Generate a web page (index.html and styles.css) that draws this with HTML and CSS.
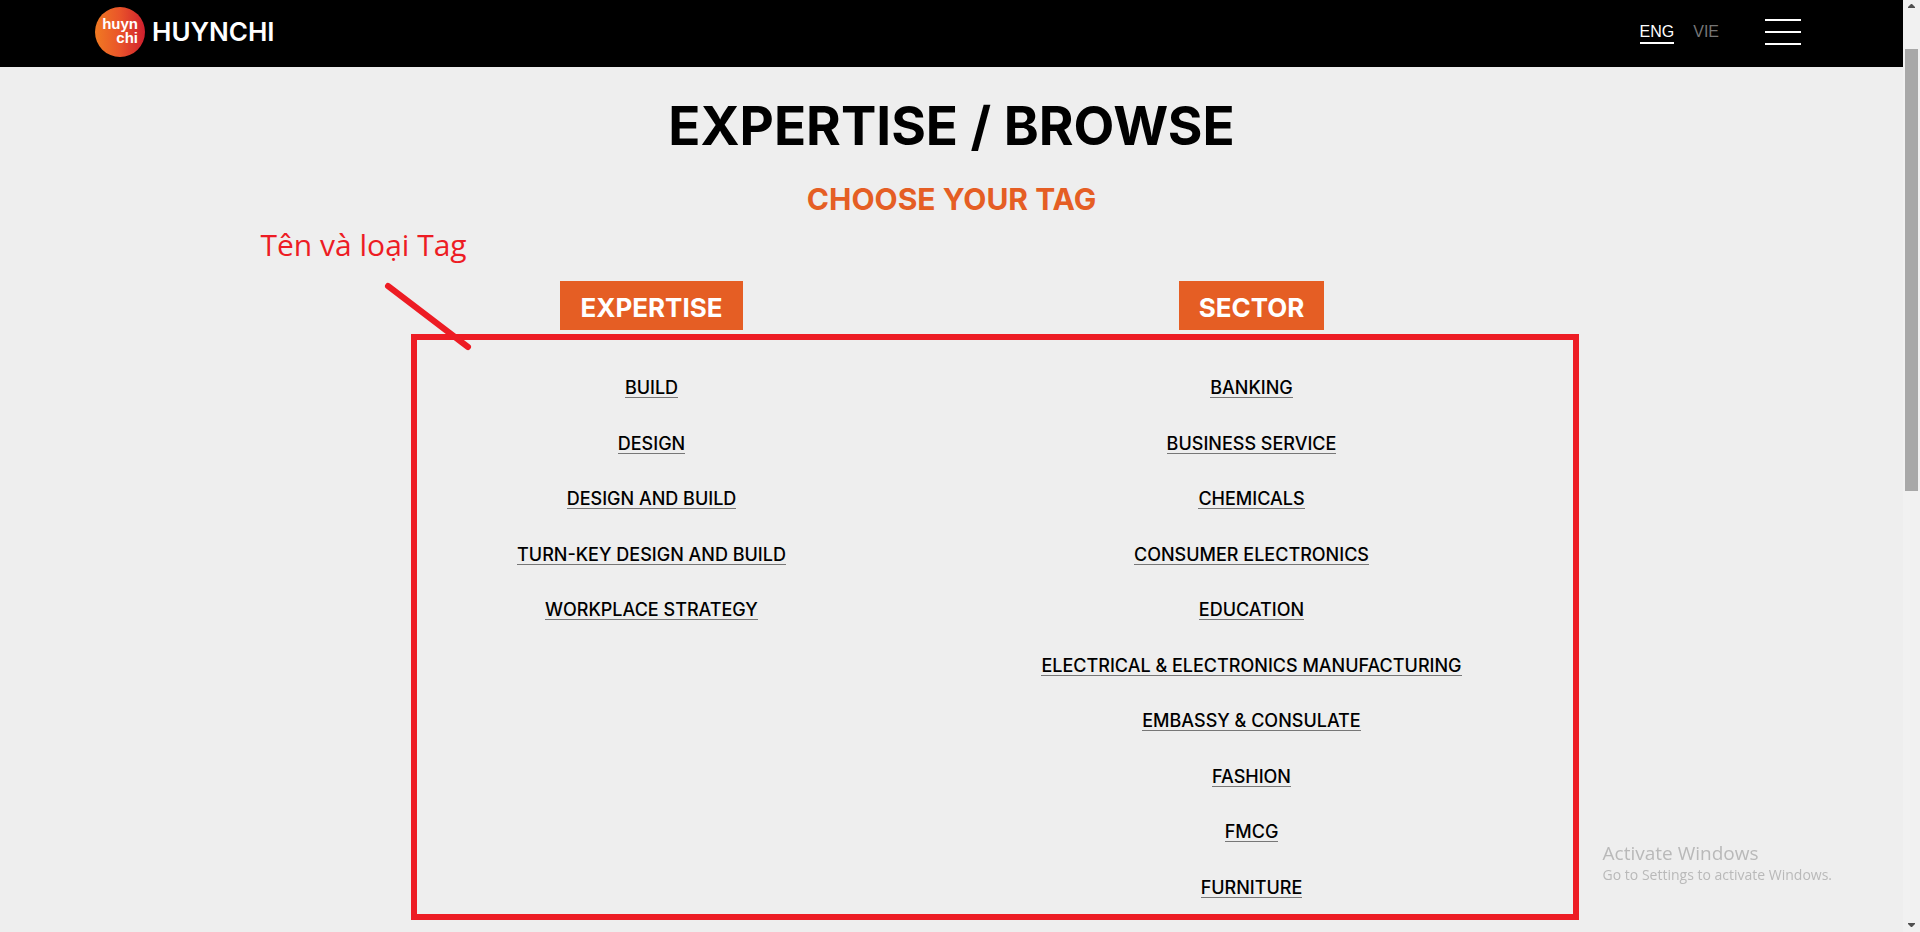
FILE: index.html
```html
<!DOCTYPE html>
<html lang="en">
<head>
  <meta charset="utf-8">
  <meta name="viewport" content="width=device-width, initial-scale=1">
  <title>Huynchi – Expertise / Browse</title>
  <link rel="stylesheet" href="styles.css">
</head>
<body>
  <div class="window">
    <div class="page">
      <header class="header">
        <a class="logo" href="#">
          <span class="logo-mark"><span>huyn</span><span>chi</span></span>
          <span class="logo-name">HUYNCHI</span>
        </a>
        <div class="header-tools">
          <nav class="languages" aria-label="Language">
            <a class="language language-active" href="#">ENG</a>
            <a class="language" href="#">VIE</a>
          </nav>
          <button class="menu-button" type="button" aria-label="Menu">
            <span></span><span></span><span></span>
          </button>
        </div>
      </header>

      <main class="content">
        <h1 class="title">EXPERTISE / BROWSE</h1>
        <h2 class="subtitle">CHOOSE YOUR TAG</h2>

        <div class="tags">
          <section class="column">
            <h3 class="label">EXPERTISE</h3>
            <ul class="list">
              <li><a href="#">BUILD</a></li>
              <li><a href="#">DESIGN</a></li>
              <li><a href="#">DESIGN AND BUILD</a></li>
              <li><a href="#">TURN-KEY DESIGN AND BUILD</a></li>
              <li><a href="#">WORKPLACE STRATEGY</a></li>
            </ul>
          </section>
          <section class="column">
            <h3 class="label">SECTOR</h3>
            <ul class="list">
              <li><a href="#">BANKING</a></li>
              <li><a href="#">BUSINESS SERVICE</a></li>
              <li><a href="#">CHEMICALS</a></li>
              <li><a href="#">CONSUMER ELECTRONICS</a></li>
              <li><a href="#">EDUCATION</a></li>
              <li><a href="#">ELECTRICAL &amp; ELECTRONICS MANUFACTURING</a></li>
              <li><a href="#">EMBASSY &amp; CONSULATE</a></li>
              <li><a href="#">FASHION</a></li>
              <li><a href="#">FMCG</a></li>
              <li><a href="#">FURNITURE</a></li>
            </ul>
          </section>

          <div class="note-frame"></div>
          <svg class="note-line" width="88" height="70" viewBox="0 0 88 70" aria-hidden="true">
            <path d="M4 4 84 65" fill="none" stroke="#ed1c24" stroke-width="6" stroke-linecap="round"/>
          </svg>
          <p class="note-text">Tên và loại Tag</p>
        </div>
      </main>
    </div>

    <div class="scrollbar" aria-hidden="true">
      <svg width="7" height="4" viewBox="0 0 7 4"><path d="M0 4V3L3 0h1l3 3v1z" fill="#505050"/></svg>
      <div class="scroll-track"><div class="scroll-thumb"></div></div>
      <svg width="7" height="4" viewBox="0 0 7 4"><path d="M0 0v1l3 3h1l3-3V0z" fill="#505050"/></svg>
    </div>
  </div>

  <aside class="watermark">
    <p class="watermark-title">Activate Windows</p>
    <p class="watermark-text">Go to Settings to activate Windows.</p>
  </aside>
</body>
</html>
```

FILE: styles.css
```css
* {
  box-sizing: border-box;
}

body,
h1,
h2,
h3,
p,
ul {
  margin: 0;
  padding: 0;
}

body {
  background: #eeeeee;
  color: #000;
  font-family: Inter, "Liberation Sans", sans-serif;
}

a {
  color: inherit;
  text-decoration: none;
}

.window {
  display: grid;
  grid-template-columns: 1fr 17px;
  min-height: 100vh;
}

/* Header */

.header {
  display: flex;
  justify-content: space-between;
  height: 67px;
  padding: 7px 102px 0 95px;
  background: #000;
  color: #fff;
}

.logo {
  display: flex;
  align-items: center;
  gap: 7px;
  height: 50px;
}

.logo-mark {
  display: flex;
  flex-direction: column;
  align-items: flex-end;
  width: 50px;
  height: 50px;
  padding: 10px 7px 0 0;
  border-radius: 50%;
  background: linear-gradient(90deg, #f07a22, #e9542a 50%, #cf1f2e);
  font-family: "Liberation Sans", Arial, sans-serif;
  font-size: 15px;
  font-weight: 700;
  line-height: 14px;
}

.logo-name {
  font-size: 26px;
  font-weight: 600;
  line-height: 32px;
}

.header-tools {
  display: flex;
  align-items: flex-start;
  gap: 46px;
  padding-top: 12px;
}

.languages {
  display: flex;
  gap: 19px;
  padding-top: 2px;
  font-family: "Liberation Sans", Arial, sans-serif;
  font-size: 16px;
  line-height: 21px;
}

.language {
  color: #757575;
}

.language-active {
  border-bottom: 2px solid #fff;
  color: #fff;
}

.menu-button {
  display: flex;
  flex-direction: column;
  justify-content: space-between;
  width: 36px;
  height: 26px;
  padding: 0;
  border: 0;
  background: none;
}

.menu-button span {
  width: 100%;
  height: 2px;
  background: #fff;
}

/* Headings */

.content {
  text-align: center;
}

.title {
  padding-top: 26px;
  font-size: 53px;
  font-weight: 700;
  line-height: 66px;
}

.subtitle {
  padding-top: 22px;
  color: #e55e24;
  font-size: 30px;
  font-weight: 700;
  line-height: 36px;
}

/* Tag columns */

.tags {
  position: relative;
  display: grid;
  grid-template-columns: 1fr 1fr;
  max-width: 1200px;
  margin: 64px auto 0;
  padding-bottom: 22px;
}

.column {
  display: flex;
  flex-direction: column;
  align-items: center;
}

.label {
  padding: 7px 20px 2px;
  background: #e55e24;
  color: #fff;
  font-size: 26px;
  font-weight: 700;
  line-height: 40px;
}

.list {
  display: grid;
  grid-template-rows: repeat(10, 21px);
  align-content: space-between;
  min-height: 521px;
  margin-top: 47px;
  list-style: none;
}

.list a {
  display: block;
  width: fit-content;
  margin: 0 auto;
  padding-top: 2px;
  border-bottom: 1px solid #777;
  font-size: 18px;
  font-weight: 500;
  line-height: 18px;
}

/* Red mark-up drawn over the page */

.note-frame {
  position: absolute;
  top: 53px;
  right: -27px;
  bottom: 0;
  left: 59px;
  border: 6px solid #ed1c24;
  pointer-events: none;
}

.note-line {
  position: absolute;
  top: 1px;
  left: 32px;
}

.note-text {
  position: absolute;
  top: -56px;
  left: -91px;
  color: #ed1c24;
  font-family: "Open Sans", "Noto Sans", sans-serif;
  font-size: 30px;
  line-height: 40px;
  white-space: nowrap;
}

/* Scrollbar */

.scrollbar {
  display: flex;
  flex-direction: column;
  align-items: center;
  gap: 7px;
  padding: 4px 0 5px;
  background: #f1f1f1;
}

.scroll-track {
  flex: 1;
  width: 13px;
  padding-top: 34px;
}

.scroll-thumb {
  height: 51%;
  background: #a8a8a8;
}

/* System watermark */

.watermark {
  position: fixed;
  right: 88px;
  bottom: 47px;
  color: #b9b9b9;
  font-family: "Open Sans", "Noto Sans", sans-serif;
}

.watermark-title {
  font-size: 19px;
  line-height: 24px;
}

.watermark-text {
  font-size: 14px;
  line-height: 20px;
}
```
